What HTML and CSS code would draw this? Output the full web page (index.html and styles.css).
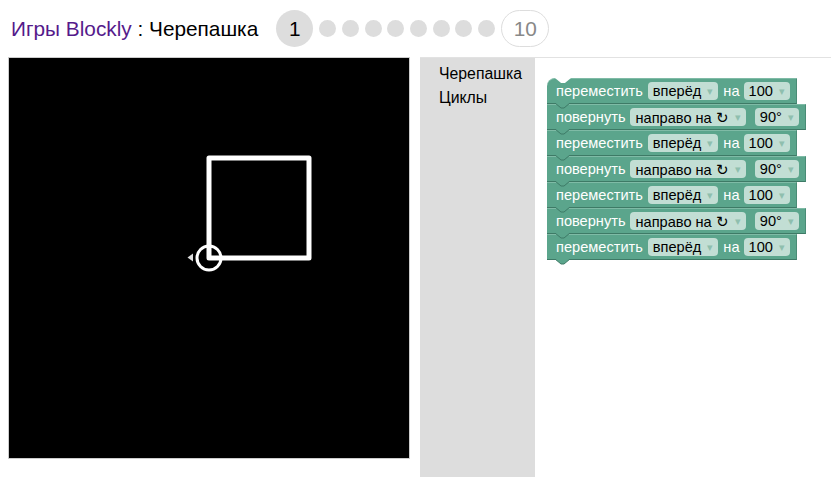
FILE: index.html
```html
<!DOCTYPE html>
<html lang="ru">
<head>
<meta charset="utf-8">
<title>Игры Blockly : Черепашка</title>
<link rel="stylesheet" href="styles.css">
</head>
<body>
<header class="header">
  <h1 class="title"><a class="home" href="#">Игры Blockly</a> : Черепашка</h1>
  <nav class="levels">
    <span class="level current">1</span>
    <span class="dot"></span><span class="dot"></span><span class="dot"></span><span class="dot"></span>
    <span class="dot"></span><span class="dot"></span><span class="dot"></span><span class="dot"></span>
    <span class="level last">10</span>
  </nav>
</header>
<main class="main">
  <div class="canvas">
    <svg class="turtle-svg" width="400" height="400" viewBox="0 0 400 400">
      <rect width="400" height="400" fill="#000"/>
      <path d="M200 200 V100 H300 V200 H200" fill="none" stroke="#fff" stroke-width="5" stroke-linecap="round" stroke-linejoin="round"/>
      <circle cx="200" cy="200" r="12" fill="none" stroke="#fff" stroke-width="3"/>
      <polygon points="178.5,199.5 184,195.5 184,203.5" fill="#ddd"/>
    </svg>
  </div>
  <section class="workspace">
    <ul class="toolbox">
      <li>Черепашка</li>
      <li>Циклы</li>
    </ul>
    <div class="blocks">
      <div class="stack">
        <div class="block move first"><span class="lbl">переместить</span><span class="field">вперёд<i class="arrow">▾</i></span><span class="lbl">на</span><span class="field">100<i class="arrow">▾</i></span><svg class="tab" width="17" height="6" viewBox="0 0 17 6"><path d="M1 0 L7 5 L10 5 L16 0" fill="#5ba58c" stroke="#3e7a66" stroke-width="1"/></svg></div>
        <div class="block turn"><span class="lbl">повернуть</span><span class="field">направо на ↻<i class="arrow">▾</i></span><span class="field deg">90°<i class="arrow">▾</i></span><svg class="tab" width="17" height="6" viewBox="0 0 17 6"><path d="M1 0 L7 5 L10 5 L16 0" fill="#5ba58c" stroke="#3e7a66" stroke-width="1"/></svg></div>
        <div class="block move"><span class="lbl">переместить</span><span class="field">вперёд<i class="arrow">▾</i></span><span class="lbl">на</span><span class="field">100<i class="arrow">▾</i></span><svg class="tab" width="17" height="6" viewBox="0 0 17 6"><path d="M1 0 L7 5 L10 5 L16 0" fill="#5ba58c" stroke="#3e7a66" stroke-width="1"/></svg></div>
        <div class="block turn"><span class="lbl">повернуть</span><span class="field">направо на ↻<i class="arrow">▾</i></span><span class="field deg">90°<i class="arrow">▾</i></span><svg class="tab" width="17" height="6" viewBox="0 0 17 6"><path d="M1 0 L7 5 L10 5 L16 0" fill="#5ba58c" stroke="#3e7a66" stroke-width="1"/></svg></div>
        <div class="block move"><span class="lbl">переместить</span><span class="field">вперёд<i class="arrow">▾</i></span><span class="lbl">на</span><span class="field">100<i class="arrow">▾</i></span><svg class="tab" width="17" height="6" viewBox="0 0 17 6"><path d="M1 0 L7 5 L10 5 L16 0" fill="#5ba58c" stroke="#3e7a66" stroke-width="1"/></svg></div>
        <div class="block turn"><span class="lbl">повернуть</span><span class="field">направо на ↻<i class="arrow">▾</i></span><span class="field deg">90°<i class="arrow">▾</i></span><svg class="tab" width="17" height="6" viewBox="0 0 17 6"><path d="M1 0 L7 5 L10 5 L16 0" fill="#5ba58c" stroke="#3e7a66" stroke-width="1"/></svg></div>
        <div class="block move"><span class="lbl">переместить</span><span class="field">вперёд<i class="arrow">▾</i></span><span class="lbl">на</span><span class="field">100<i class="arrow">▾</i></span><svg class="tab" width="17" height="6" viewBox="0 0 17 6"><path d="M1 0 L7 5 L10 5 L16 0" fill="#5ba58c" stroke="#3e7a66" stroke-width="1"/></svg></div>
      </div>
    </div>
  </section>
</main>
</body>
</html>
```
FILE: styles.css
```css
html, body {
  margin: 0;
  padding: 0;
  background: #fff;
  font-family: "Liberation Sans", Arial, sans-serif;
  overflow: hidden;
}

.header {
  height: 57px;
  display: flex;
  align-items: center;
  padding-left: 11px;
  box-sizing: border-box;
}

.title {
  margin: 0;
  font-size: 20.8px;
  font-weight: normal;
  color: #000;
  white-space: nowrap;
  padding-top: 1px;
}

.home {
  color: #551a8b;
  text-decoration: none;
}

.levels {
  display: flex;
  align-items: center;
  gap: 5.7px;
  margin-left: 18px;
}

.level {
  display: flex;
  align-items: center;
  justify-content: center;
  height: 37px;
  font-size: 20.8px;
  box-sizing: border-box;
}

.level.current {
  width: 37px;
  border-radius: 50%;
  background: #ddd;
  color: #000;
  margin-right: 0.3px;
}

.level.last {
  width: 48px;
  border: 1px solid #ddd;
  border-radius: 19px;
  color: #888;
  background: #fff;
  margin-left: 0.5px;
}

.dot {
  width: 17px;
  height: 17px;
  border-radius: 50%;
  background: #ddd;
}

.main {
  display: flex;
  align-items: flex-start;
}

.canvas {
  margin-left: 8px;
  border: 1px solid #ccc;
  width: 400px;
  height: 400px;
}

.turtle-svg {
  display: block;
}

.workspace {
  flex: 1;
  margin-left: 10px;
  height: 420px;
  border-top: 1px solid #e2e2e2;
  display: flex;
}

.toolbox {
  list-style: none;
  margin: 0;
  width: 115px;
  background: #ddd;
  padding: 4px 0 0 19px;
  box-sizing: border-box;
  font-size: 15.8px;
  color: #000;
}

.toolbox li {
  line-height: 24px;
}

.blocks {
  flex: 1;
  padding: 20px 0 0 12px;
}

.stack {
  display: flex;
  flex-direction: column;
  align-items: flex-start;
}

.block {
  position: relative;
  display: flex;
  align-items: center;
  height: 26px;
  box-sizing: border-box;
  padding: 0 6px 0 9px;
  background: #5ba58c;
  border-top: 1px solid #7fbba6;
  border-bottom: 1px solid #3e7a66;
  border-right: 1px solid #4a8c76;
  color: #fff;
  font-size: 14.6px;
  white-space: nowrap;
}

.block.first {
  border-top-left-radius: 8px;
}

.block.first::before {
  content: "";
  position: absolute;
  top: -1px;
  left: 8px;
  width: 16px;
  height: 5px;
  background: #fff;
  clip-path: polygon(0 0, 100% 0, 62% 100%, 38% 100%);
}

.tab {
  position: absolute;
  left: 7px;
  bottom: -6px;
  z-index: 2;
  display: block;
}

.lbl {
  margin-right: 5px;
}

.move .lbl + .field + .lbl {
  margin-left: 0;
  margin-right: 4px;
}

.field {
  display: inline-flex;
  align-items: center;
  height: 18px;
  padding: 0 5px 0 5px;
  margin-right: 5px;
  border-radius: 4px;
  background: #c2ded4;
  color: #000;
}

.field:last-of-type {
  margin-right: 0;
}

.field.deg {
  margin-left: 4px;
}

.arrow {
  font-style: normal;
  color: #8fbfae;
  font-size: 11px;
  margin-left: 6px;
}
```
